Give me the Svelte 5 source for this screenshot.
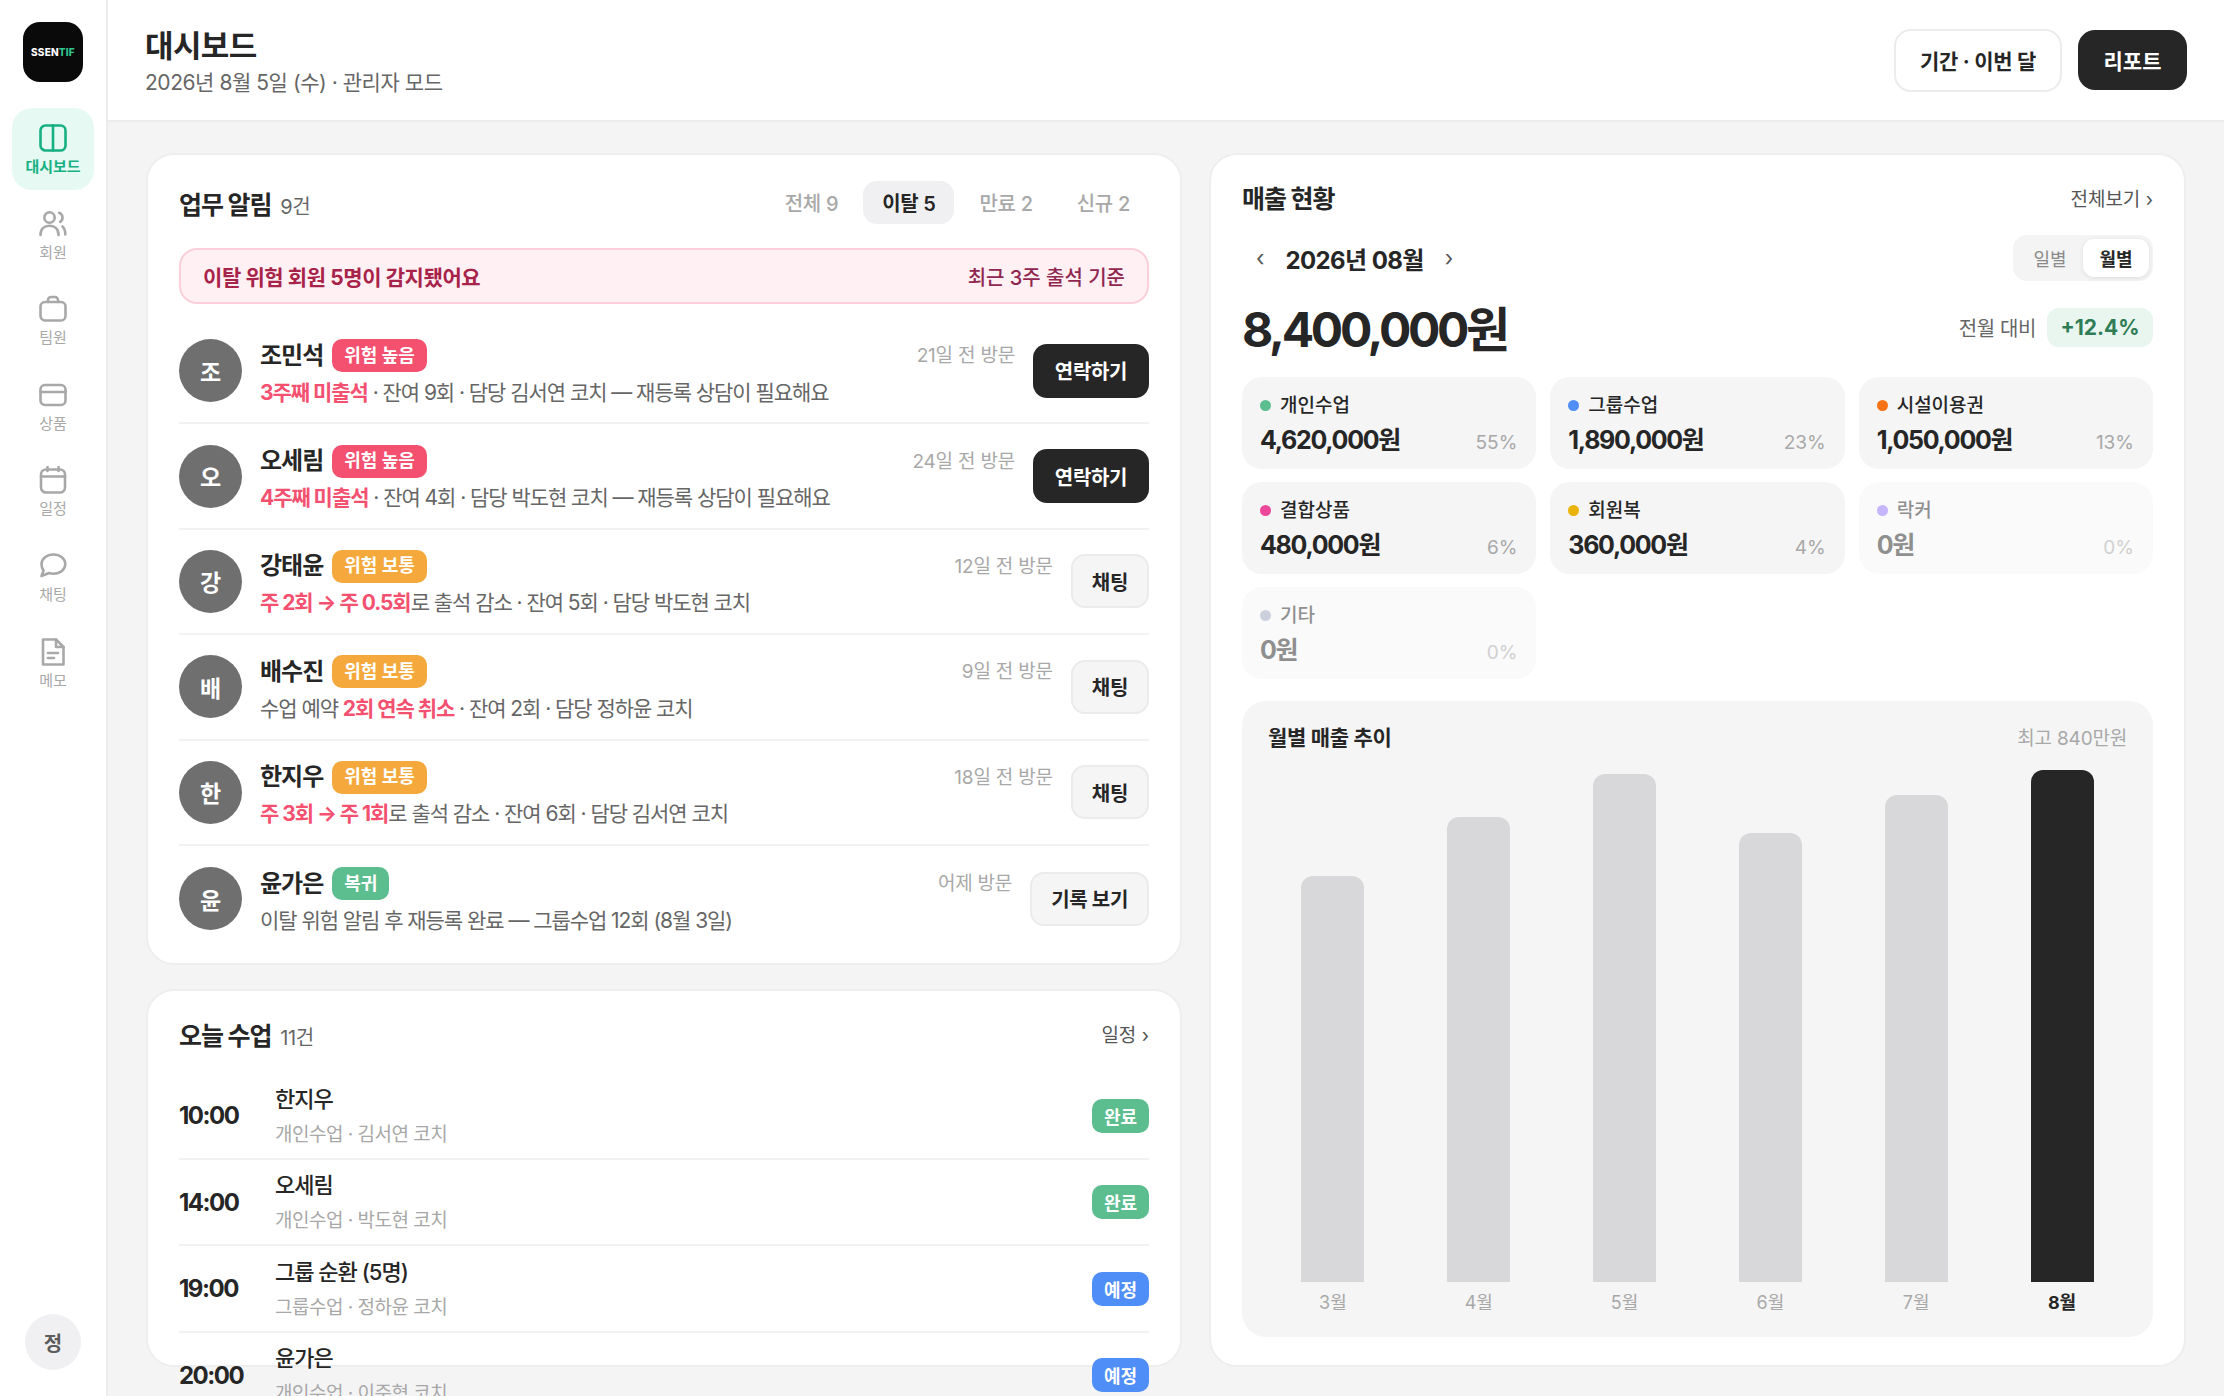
<script lang="ts">
  const nav = [
    { key: 'dash', label: '대시보드', active: true },
    { key: 'members', label: '회원' },
    { key: 'team', label: '팀원' },
    { key: 'product', label: '상품' },
    { key: 'schedule', label: '일정' },
    { key: 'chat', label: '채팅' },
    { key: 'memo', label: '메모' }
  ];

  const tabs = [
    { label: '전체 9' },
    { label: '이탈 5', active: true },
    { label: '만료 2' },
    { label: '신규 2' }
  ];

  const alerts = [
    { name: '조민석', badge: '위험 높음', level: 'high', visit: '21일 전 방문', action: '연락하기', primary: true,
      parts: [['3주째 미출석', true], [' · 잔여 9회 · 담당 김서연 코치 — 재등록 상담이 필요해요', false]] },
    { name: '오세림', badge: '위험 높음', level: 'high', visit: '24일 전 방문', action: '연락하기', primary: true,
      parts: [['4주째 미출석', true], [' · 잔여 4회 · 담당 박도현 코치 — 재등록 상담이 필요해요', false]] },
    { name: '강태윤', badge: '위험 보통', level: 'mid', visit: '12일 전 방문', action: '채팅',
      parts: [['주 2회 → 주 0.5회', true], ['로 출석 감소 · 잔여 5회 · 담당 박도현 코치', false]] },
    { name: '배수진', badge: '위험 보통', level: 'mid', visit: '9일 전 방문', action: '채팅',
      parts: [['수업 예약 ', false], ['2회 연속 취소', true], [' · 잔여 2회 · 담당 정하윤 코치', false]] },
    { name: '한지우', badge: '위험 보통', level: 'mid', visit: '18일 전 방문', action: '채팅',
      parts: [['주 3회 → 주 1회', true], ['로 출석 감소 · 잔여 6회 · 담당 김서연 코치', false]] },
    { name: '윤가은', badge: '복귀', level: 'back', visit: '어제 방문', action: '기록 보기',
      parts: [['이탈 위험 알림 후 재등록 완료 — 그룹수업 12회 (8월 3일)', false]] }
  ];

  const lessons = [
    { time: '10:00', name: '한지우', sub: '개인수업 · 김서연 코치', status: '완료', done: true },
    { time: '14:00', name: '오세림', sub: '개인수업 · 박도현 코치', status: '완료', done: true },
    { time: '19:00', name: '그룹 순환 (5명)', sub: '그룹수업 · 정하윤 코치', status: '예정' },
    { time: '20:00', name: '윤가은', sub: '개인수업 · 이준혁 코치', status: '예정' }
  ];

  const tiles = [
    { label: '개인수업', value: '4,620,000원', pct: '55%', color: '#5cbd8e' },
    { label: '그룹수업', value: '1,890,000원', pct: '23%', color: '#4f8ef7' },
    { label: '시설이용권', value: '1,050,000원', pct: '13%', color: '#f97316' },
    { label: '결합상품', value: '480,000원', pct: '6%', color: '#ec4899' },
    { label: '회원복', value: '360,000원', pct: '4%', color: '#eab308' },
    { label: '락커', value: '0원', pct: '0%', color: '#c4b5fd', empty: true },
    { label: '기타', value: '0원', pct: '0%', color: '#cbd0dc', empty: true }
  ];

  const months = [
    { label: '3월', h: 406 },
    { label: '4월', h: 465 },
    { label: '5월', h: 508 },
    { label: '6월', h: 449 },
    { label: '7월', h: 487 },
    { label: '8월', h: 512, current: true }
  ];
</script>

<div class="app">
  <aside class="sidebar">
    <div class="logo">SSEN<span>TIF</span></div>
    <nav class="nav">
      {#each nav as item}
        <div class="nav-item" class:active={item.active}>
          <svg viewBox="0 0 28 28" width="28" height="28" fill="none" stroke="currentColor" stroke-width="2.6" stroke-linecap="round" stroke-linejoin="round">
            {#if item.key === 'dash'}
              <rect x="1.5" y="1.5" width="25" height="25" rx="5" />
              <path d="M14 1.5v25" />
            {:else if item.key === 'members'}
              <circle cx="10.5" cy="7.5" r="5.2" />
              <path d="M1.5 25c0-6 3.6-9.2 9-9.2s9 3.2 9 9.2" />
              <path d="M20 2.8a5 5 0 0 1 1.2 9" />
              <path d="M23.5 16.5c1.8 1.6 2.8 4.5 2.8 8" />
            {:else if item.key === 'team'}
              <rect x="1.5" y="7" width="25" height="18.5" rx="4.5" />
              <path d="M9 7V5a3 3 0 0 1 3-3h4a3 3 0 0 1 3 3v2" />
            {:else if item.key === 'product'}
              <rect x="1.5" y="4" width="25" height="20" rx="4.5" />
              <path d="M1.5 11h25" />
            {:else if item.key === 'schedule'}
              <rect x="2" y="3.5" width="24" height="23" rx="5" />
              <path d="M2 10.5h24M8.5 1v4M19.5 1v4" />
            {:else if item.key === 'chat'}
              <path d="M14.5 2.5c6.6 0 11.8 4 11.8 9.6s-5.2 9.6-11.8 9.6c-1.6 0-3.1-.2-4.5-.7L2.5 24l2-5.4c-1.500-1.800-2-4.100-2-6.500 0-5.600 5.400-9.600 12-9.600z" />
            {:else}
              <path d="M4 1.500h13l7.500 7.500v17.500H4z" />
              <path d="M17 1.500V9h7.500M9 15h10M9 20h6" />
            {/if}
          </svg>
          <span>{item.label}</span>
        </div>
      {/each}
    </nav>
    <div class="me">정</div>
  </aside>

  <div class="main">
    <header class="topbar">
      <div class="titles">
        <h1>대시보드</h1>
        <p>2026년 8월 5일 (수) · 관리자 모드</p>
      </div>
      <div class="top-actions">
        <button class="btn-period">기간 · 이번 달</button>
        <button class="btn-report">리포트</button>
      </div>
    </header>

    <div class="content">
      <div class="left">
        <section class="card alerts">
          <div class="card-head">
            <h2>업무 알림 <small>9건</small></h2>
            <div class="tabs">
              {#each tabs as tab}
                <span class="tab" class:active={tab.active}>{tab.label}</span>
              {/each}
            </div>
          </div>
          <div class="banner">
            <strong>이탈 위험 회원 5명이 감지됐어요</strong>
            <span>최근 3주 출석 기준</span>
          </div>
          {#each alerts as a}
            <div class="alert-row">
              <div class="avatar">{a.name[0]}</div>
              <div class="alert-text">
                <div class="alert-name">{a.name}<span class="badge {a.level}">{a.badge}</span></div>
                <div class="alert-detail">
                  {#each a.parts as p}
                    {#if p[1]}<b>{p[0]}</b>{:else}{p[0]}{/if}
                  {/each}
                </div>
              </div>
              <span class="visit">{a.visit}</span>
              <button class="row-btn" class:primary={a.primary}>{a.action}</button>
            </div>
          {/each}
        </section>

        <section class="card today">
          <div class="today-head">
            <h2>오늘 수업 <small>11건</small></h2>
            <span class="link">일정 ›</span>
          </div>
          {#each lessons as l}
            <div class="lesson">
              <span class="time">{l.time}</span>
              <div class="lesson-text">
                <div class="lesson-name">{l.name}</div>
                <div class="lesson-sub">{l.sub}</div>
              </div>
              <span class="status" class:done={l.done}>{l.status}</span>
            </div>
          {/each}
        </section>
      </div>

      <section class="card sales">
        <div class="sales-head">
          <h2>매출 현황</h2>
          <span class="link">전체보기 ›</span>
        </div>
        <div class="period-row">
          <div class="month-nav">
            <span class="arrow">‹</span>
            <strong>2026년 08월</strong>
            <span class="arrow">›</span>
          </div>
          <div class="toggle">
            <span>일별</span>
            <span class="on">월별</span>
          </div>
        </div>
        <div class="total-row">
          <div class="total">8,400,000원</div>
          <div class="compare">전월 대비 <span class="delta">+12.4%</span></div>
        </div>
        <div class="tiles">
          {#each tiles as t}
            <div class="tile" class:empty={t.empty}>
              <div class="tile-label"><i style="background: {t.color}"></i><em>{t.label}</em></div>
              <div class="tile-bottom">
                <strong>{t.value}</strong>
                <span>{t.pct}</span>
              </div>
            </div>
          {/each}
        </div>
        <div class="chart">
          <div class="chart-head">
            <strong>월별 매출 추이</strong>
            <span>최고 840만원</span>
          </div>
          <div class="bars">
            {#each months as m}
              <div class="col" class:current={m.current}>
                <div class="bar" style="height: {m.h}px"></div>
                <span>{m.label}</span>
              </div>
            {/each}
          </div>
        </div>
      </section>
    </div>
  </div>
</div>

<style>
  :global(body) {
    margin: 0;
    background: #f4f4f5;
    font-family: Inter, "Noto Sans CJK KR", "Noto Sans", sans-serif;
    color: #262626;
  }

  .app {
    display: flex;
    width: 2224px;
    height: 1396px;
    overflow: hidden;
  }

  h1, h2, p {
    margin: 0;
  }

  button {
    font-family: inherit;
    cursor: pointer;
  }

  /* sidebar */
  .sidebar {
    width: 106px;
    flex: none;
    background: #fff;
    border-right: 2px solid #ececee;
    display: flex;
    flex-direction: column;
    align-items: center;
    padding-top: 22px;
  }

  .logo {
    width: 60px;
    height: 60px;
    border-radius: 17px;
    background: #0a0a0a;
    color: #fff;
    font-size: 10px;
    font-weight: 800;
    display: flex;
    align-items: center;
    justify-content: center;
    letter-spacing: 0.2px;
  }

  .logo span {
    color: #2fc58f;
  }

  .nav {
    margin-top: 26px;
    display: flex;
    flex-direction: column;
    gap: 3.6px;
  }

  .nav-item {
    width: 82px;
    height: 82px;
    box-sizing: border-box;
    padding-top: 2px;
    border-radius: 20px;
    color: #a8a8a8;
    display: flex;
    flex-direction: column;
    align-items: center;
    justify-content: center;
    gap: 3px;
    font-size: 15px;
  }

  .nav-item.active {
    background: #e6f9f2;
    color: #17b083;
    font-weight: 600;
  }

  .me {
    margin-top: auto;
    margin-bottom: 26px;
    width: 56px;
    height: 56px;
    border-radius: 50%;
    background: #f0f0f2;
    color: #5c5c5c;
    font-size: 20px;
    font-weight: 700;
    display: flex;
    align-items: center;
    justify-content: center;
  }

  /* header */
  .main {
    flex: 1;
    min-width: 0;
    display: flex;
    flex-direction: column;
  }

  .topbar {
    height: 120px;
    flex: none;
    background: #fff;
    border-bottom: 2px solid #ececee;
    display: flex;
    align-items: center;
    justify-content: space-between;
    padding: 0 37px 0 37px;
  }

  .titles {
    padding-top: 5px;
  }

  h1 {
    font-size: 31px;
    font-weight: 700;
    line-height: 38px;
    letter-spacing: -0.6px;
  }

  .topbar p {
    font-size: 21px;
    line-height: 30px;
    margin-top: 3px;
    color: #666;
    letter-spacing: -0.45px;
  }

  .top-actions {
    display: flex;
    align-items: center;
    gap: 16px;
  }

  .btn-period {
    width: 168px;
    height: 63px;
    border: 2px solid #ececee;
    border-radius: 17px;
    background: #fff;
    color: #262626;
    font-size: 21px;
    font-weight: 700;
    letter-spacing: -0.3px;
  }

  .btn-report {
    width: 109px;
    height: 60px;
    border: 0;
    border-radius: 17px;
    background: #262626;
    color: #fff;
    font-size: 21px;
    font-weight: 700;
  }

  /* layout */
  .content {
    flex: 1;
    min-height: 0;
    display: grid;
    grid-template-columns: 1036fr 977fr;
    gap: 27px;
    padding: 31px 38px 29px;
  }

  .left {
    display: flex;
    flex-direction: column;
    gap: 24px;
    min-height: 0;
  }

  .card {
    background: #fff;
    border: 2px solid #eeeeef;
    border-radius: 28px;
    box-sizing: border-box;
    padding: 0 31px;
  }

  h2 {
    font-size: 25px;
    font-weight: 700;
    letter-spacing: -1.1px;
  }

  h2 small {
    font-size: 20px;
    font-weight: 400;
    color: #666;
    margin-left: 4px;
    letter-spacing: -0.4px;
  }

  .link {
    font-size: 19px;
    color: #555;
  }

  /* alerts */
  .alerts {
    padding-bottom: 12px;
  }

  .card-head {
    display: flex;
    align-items: center;
    justify-content: space-between;
    padding-top: 26px;
  }

  .tabs {
    display: flex;
    gap: 6px;
  }

  .tab {
    height: 43px;
    padding: 0 19px;
    border-radius: 14px;
    display: flex;
    align-items: center;
    font-size: 20px;
    font-weight: 500;
    color: #a8a8a8;
    letter-spacing: -0.3px;
  }

  .tab.active {
    background: #f0f0f2;
    color: #262626;
    font-weight: 600;
  }

  .banner {
    margin: 24px 0 15px;
    height: 56px;
    box-sizing: border-box;
    padding: 0 22px;
    border: 2px solid #fbcfdb;
    border-radius: 18px;
    background: #fff0f3;
    display: flex;
    align-items: center;
    justify-content: space-between;
    color: #a8234a;
  }

  .banner strong {
    font-size: 21px;
    font-weight: 700;
    letter-spacing: -0.4px;
  }

  .banner span {
    font-size: 20px;
    font-weight: 500;
    color: #8f2750;
  }

  .alert-row {
    height: 105.4px;
    box-sizing: border-box;
    border-bottom: 2px solid #f2f2f3;
    display: flex;
    align-items: center;
  }

  .alert-row:last-child {
    border-bottom: 0;
  }

  .avatar {
    width: 63px;
    height: 63px;
    flex: none;
    border-radius: 50%;
    background: #6f6f6f;
    color: #fff;
    font-size: 23px;
    font-weight: 700;
    display: flex;
    align-items: center;
    justify-content: center;
  }

  .alert-text {
    flex: 1;
    min-width: 0;
    margin-left: 18px;
    padding-top: 5px;
  }

  .alert-name {
    display: flex;
    align-items: center;
    gap: 9px;
    font-size: 24px;
    font-weight: 700;
    line-height: 34px;
    letter-spacing: -1px;
  }

  .badge {
    height: 33px;
    padding: 0 12px;
    border-radius: 10px;
    display: flex;
    align-items: center;
    color: #fff;
    font-size: 18px;
    font-weight: 700;
    letter-spacing: 0;
  }

  .badge.high {
    background: #f4506f;
  }

  .badge.mid {
    background: #f5a93c;
  }

  .badge.back {
    background: #5cbd8e;
  }

  .alert-detail {
    margin-top: 5px;
    font-size: 21px;
    line-height: 30px;
    color: #666;
    white-space: pre-wrap;
    letter-spacing: -1.05px;
  }

  .alert-detail b {
    color: #f4506f;
    font-weight: 700;
  }

  .visit {
    margin: 0 18px 34px 0;
    font-size: 19px;
    color: #a8a8a8;
    letter-spacing: -0.2px;
  }

  .row-btn {
    height: 54px;
    padding: 0 19px;
    border: 2px solid #ebebed;
    border-radius: 14px;
    background: #f5f5f6;
    color: #262626;
    font-size: 20px;
    font-weight: 700;
    letter-spacing: -0.3px;
  }

  .row-btn.primary {
    width: 116px;
    padding: 0;
    background: #262626;
    border: 0;
    color: #fff;
  }

  /* today */
  .today {
    flex: 1;
    min-height: 0;
  }

  .today-head {
    display: flex;
    align-items: center;
    justify-content: space-between;
    height: 82px;
    padding-top: 3px;
    box-sizing: border-box;
  }

  .lesson {
    height: 86.5px;
    box-sizing: border-box;
    border-bottom: 2px solid #f2f2f3;
    display: flex;
    align-items: center;
  }

  .time {
    width: 96px;
    font-size: 24px;
    font-weight: 700;
    letter-spacing: -1.5px;
  }

  .lesson-text {
    flex: 1;
  }

  .lesson-name {
    font-size: 22px;
    font-weight: 500;
    line-height: 32px;
    letter-spacing: -1px;
  }

  .lesson-sub {
    margin-top: 6px;
    font-size: 19px;
    line-height: 28px;
    color: #a8a8a8;
    letter-spacing: -0.5px;
  }

  .status {
    width: 57px;
    height: 34px;
    border-radius: 10px;
    background: #4f8ef7;
    color: #fff;
    font-size: 18px;
    font-weight: 700;
    display: flex;
    align-items: center;
    justify-content: center;
  }

  .status.done {
    background: #5cbd8e;
  }

  /* sales */
  .sales {
    display: flex;
    flex-direction: column;
    min-height: 0;
  }

  .sales-head {
    display: flex;
    align-items: center;
    justify-content: space-between;
    height: 68px;
    padding-top: 16px;
    box-sizing: border-box;
  }

  .period-row {
    display: flex;
    align-items: center;
    justify-content: space-between;
    margin-top: 12px;
  }

  .month-nav {
    display: flex;
    align-items: center;
    gap: 21px;
    padding-left: 14px;
  }

  .month-nav strong {
    font-size: 24px;
    font-weight: 700;
    letter-spacing: -0.6px;
  }

  .arrow {
    font-size: 22px;
    color: #555;
  }

  .toggle {
    display: flex;
    height: 46px;
    box-sizing: border-box;
    padding: 4px;
    border-radius: 14px;
    background: #f4f4f5;
  }

  .toggle span {
    width: 66px;
    display: flex;
    align-items: center;
    justify-content: center;
    border-radius: 11px;
    font-size: 18px;
    color: #8a8a8a;
  }

  .toggle .on {
    background: #fff;
    color: #262626;
    font-weight: 700;
    box-shadow: 0 1px 4px rgba(0, 0, 0, 0.1);
  }

  .total-row {
    display: flex;
    align-items: center;
    justify-content: space-between;
    margin-top: 13.5px;
    height: 62px;
  }

  .total {
    font-size: 48px;
    font-weight: 700;
    letter-spacing: -3.3px;
  }

  .compare {
    display: flex;
    align-items: center;
    gap: 11px;
    margin-top: 4px;
    font-size: 20px;
    color: #666;
    letter-spacing: -0.4px;
  }

  .delta {
    height: 39px;
    width: 106px;
    border-radius: 12px;
    background: #e8f6ef;
    color: #2f7d56;
    font-size: 21px;
    font-weight: 700;
    display: flex;
    align-items: center;
    justify-content: center;
    letter-spacing: 0;
  }

  .tiles {
    display: grid;
    grid-template-columns: repeat(3, 1fr);
    gap: 13px 14px;
    margin-top: 20.5px;
  }

  .tile {
    height: 92px;
    box-sizing: border-box;
    padding: 14.5px 19px 0 18px;
    border-radius: 20px;
    background: #f5f5f6;
  }

  .tile.empty {
    background: #fafafa;
  }

  .tile-label {
    display: flex;
    align-items: center;
    gap: 9px;
    font-size: 19px;
    font-weight: 500;
    line-height: 28px;
  }

  .tile-label em {
    font-style: normal;
  }

  .tile-label i {
    width: 11px;
    height: 11px;
    border-radius: 50%;
  }

  .tile-bottom {
    display: flex;
    align-items: baseline;
    justify-content: space-between;
    margin-top: 2.5px;
  }

  .tile-bottom strong {
    font-size: 25px;
    font-weight: 700;
    line-height: 36px;
    letter-spacing: -1.3px;
  }

  .tile-bottom span {
    font-size: 19px;
    color: #a8a8a8;
  }

  .tile.empty em,
  .tile.empty strong,
  .tile.empty span {
    opacity: 0.5;
  }

  .chart {
    margin-top: 22px;
    height: 636px;
    box-sizing: border-box;
    border-radius: 24px;
    background: #f5f5f5;
    padding: 20px 18px 0;
  }

  .chart-head {
    display: flex;
    align-items: center;
    justify-content: space-between;
    height: 30px;
    padding: 0 8px;
  }

  .chart-head strong {
    font-size: 21px;
    font-weight: 700;
    letter-spacing: -0.3px;
  }

  .chart-head span {
    font-size: 19px;
    color: #a8a8a8;
    letter-spacing: -0.2px;
  }

  .bars {
    display: flex;
    align-items: flex-end;
    height: 565px;
  }

  .col {
    flex: 1;
    display: flex;
    flex-direction: column;
    align-items: center;
    gap: 8px;
    font-size: 18px;
    color: #a8a8a8;
  }

  .col span {
    line-height: 26px;
  }

  .bar {
    width: 63px;
    border-radius: 12px 12px 0 0;
    background: #d8d8da;
  }

  .col.current {
    color: #262626;
    font-weight: 700;
  }

  .col.current .bar {
    background: #262626;
  }
</style>
